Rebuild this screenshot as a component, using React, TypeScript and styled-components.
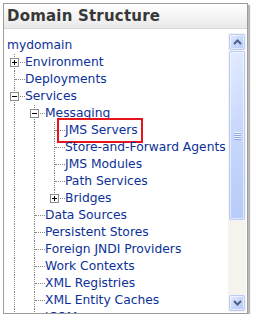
import styled, { createGlobalStyle, css } from 'styled-components';

const GlobalStyle = createGlobalStyle`
    html, body {
        margin: 0;
        padding: 0;
        background: #ffffff;
    }
    body {
        font-family: "DejaVu Sans", Verdana, sans-serif;
    }
`;

const Page = styled.div`
    padding: 3px 0 0 3px;
`;

const Panel = styled.div`
    width: 245px;
    height: 311px;
    box-sizing: border-box;
    border: 1px solid #9c9c9c;
    box-shadow: 2px 2px 1px rgba(0, 0, 0, 0.28);
    background: #ffffff;
    display: flex;
    flex-direction: column;
    overflow: hidden;
`;

const Header = styled.div`
    height: 25px;
    flex: none;
    box-sizing: border-box;
    border-bottom: 1px solid #d8d8d8;
    background: linear-gradient(#ffffff, #e9e9e9);
    display: flex;
    align-items: center;
    padding-left: 3px;
    font-weight: bold;
    font-size: 15px;
    letter-spacing: 0.2px;
    color: #383838;
`;

const Body = styled.div`
    flex: 1;
    display: flex;
    min-height: 0;
`;

const Tree = styled.ul`
    flex: 1;
    margin: 0;
    padding: 8px 0 0 0;
    list-style: none;
    overflow: hidden;
`;

const Row = styled.li`
    height: 17px;
    display: flex;
    align-items: stretch;
`;

const line = css`
    content: '';
    position: absolute;
    left: 10px;
    border-left: 1px dotted #858585;
`;

const Guide = styled.span<{ $on: boolean }>`
    width: 20px;
    flex: none;
    position: relative;
    &::before {
        ${line};
        top: 0;
        bottom: 0;
        display: ${(p) => (p.$on ? 'block' : 'none')};
    }
`;

const Connector = styled.span<{ $last?: boolean }>`
    width: 20px;
    flex: none;
    position: relative;
    &::before {
        ${line};
        top: 0;
        bottom: ${(p) => (p.$last ? '8px' : '0')};
    }
    &::after {
        content: '';
        position: absolute;
        left: 11px;
        right: -1px;
        top: 8px;
        border-top: 1px dotted #858585;
    }
`;

const Expander = styled.span<{ $open: boolean }>`
    position: absolute;
    z-index: 1;
    left: 6px;
    top: 4px;
    width: 9px;
    height: 9px;
    box-sizing: border-box;
    border: 1px solid #8a8a8a;
    background: #ffffff;
    &::before {
        content: '';
        position: absolute;
        left: 1px;
        top: 3px;
        width: 5px;
        height: 1px;
        background: #000000;
    }
    &::after {
        content: '';
        position: absolute;
        left: 3px;
        top: 1px;
        width: 1px;
        height: 5px;
        background: #000000;
        display: ${(p) => (p.$open ? 'none' : 'block')};
    }
`;

const Label = styled.a<{ $root?: boolean; $marked?: boolean }>`
    position: relative;
    margin-left: ${(p) => (p.$root ? '3px' : '1px')};
    font-size: 12.3px;
    line-height: 17px;
    color: #0c3198;
    text-decoration: none;
    white-space: nowrap;
    ${(p) =>
        p.$marked &&
        css`
            &::after {
                content: '';
                position: absolute;
                left: -8px;
                right: -5px;
                top: -4px;
                bottom: -4px;
                border: 2px solid #e8141c;
            }
        `}
`;

const Scroll = styled.div`
    width: 18px;
    flex: none;
    margin: 4px 1px 1px 0;
    background: #f4f3ee;
    display: flex;
    flex-direction: column;
    align-items: center;
    padding: 1px 0;
    gap: 1px;
`;

const blueBox = css`
    width: 16px;
    box-sizing: border-box;
    border: 1px solid #b9cbf3;
    border-radius: 2px;
    background: linear-gradient(135deg, #e3ebfe 0%, #c9d8fc 45%, #b6cbf8 100%);
    box-shadow: inset 0 0 0 1px rgba(255, 255, 255, 0.55);
`;

const ArrowButton = styled.div`
    ${blueBox};
    height: 16px;
    flex: none;
    display: flex;
    align-items: center;
    justify-content: center;
`;

const Thumb = styled.div`
    ${blueBox};
    height: 169px;
    flex: none;
    display: flex;
    align-items: center;
    justify-content: center;
`;

const Grip = styled.div`
    width: 7px;
    height: 8px;
    background: repeating-linear-gradient(#eef3ff 0 1px, #8eaaea 1px 2px);
`;

const Spacer = styled.div`
    flex: 1;
`;

const Chevron = ({ up }: { up?: boolean }) => (
    <svg width="9" height="6" viewBox="0 0 9 6">
        <path
            d={up ? 'M1 5 L4.5 1.5 L8 5' : 'M1 1 L4.5 4.5 L8 1'}
            fill="none"
            stroke="#4d6185"
            strokeWidth="2"
        />
    </svg>
);

type Node = {
    label: string;
    level: number;
    expander?: '+' | '-';
    last?: boolean;
    marked?: boolean;
};

const nodes: Node[] = [
    { label: 'mydomain', level: 0 },
    { label: 'Environment', level: 1, expander: '+' },
    { label: 'Deployments', level: 1 },
    { label: 'Services', level: 1, expander: '-' },
    { label: 'Messaging', level: 2, expander: '-' },
    { label: 'JMS Servers', level: 3, marked: true },
    { label: 'Store-and-Forward Agents', level: 3 },
    { label: 'JMS Modules', level: 3 },
    { label: 'Path Services', level: 3 },
    { label: 'Bridges', level: 3, expander: '+', last: true },
    { label: 'Data Sources', level: 2 },
    { label: 'Persistent Stores', level: 2 },
    { label: 'Foreign JNDI Providers', level: 2 },
    { label: 'Work Contexts', level: 2 },
    { label: 'XML Registries', level: 2 },
    { label: 'XML Entity Caches', level: 2 },
    { label: 'jCOM', level: 2 },
];

export default function App() {
    return (
        <>
            <GlobalStyle />
            <Page>
                <Panel>
                    <Header>Domain Structure</Header>
                    <Body>
                        <Tree>
                            {nodes.map((node) => (
                                <Row key={node.label}>
                                    {Array.from({ length: Math.max(node.level - 1, 0) }).map((_, i) => (
                                        <Guide key={i} $on />
                                    ))}
                                    {node.level > 0 && (
                                        <Connector $last={node.last}>
                                            {node.expander && <Expander $open={node.expander === '-'} />}
                                        </Connector>
                                    )}
                                    <Label href="#" $root={node.level === 0} $marked={node.marked}>
                                        {node.label}
                                    </Label>
                                </Row>
                            ))}
                        </Tree>
                        <Scroll>
                            <ArrowButton>
                                <Chevron up />
                            </ArrowButton>
                            <Thumb>
                                <Grip />
                            </Thumb>
                            <Spacer />
                            <ArrowButton>
                                <Chevron />
                            </ArrowButton>
                        </Scroll>
                    </Body>
                </Panel>
            </Page>
        </>
    );
}
